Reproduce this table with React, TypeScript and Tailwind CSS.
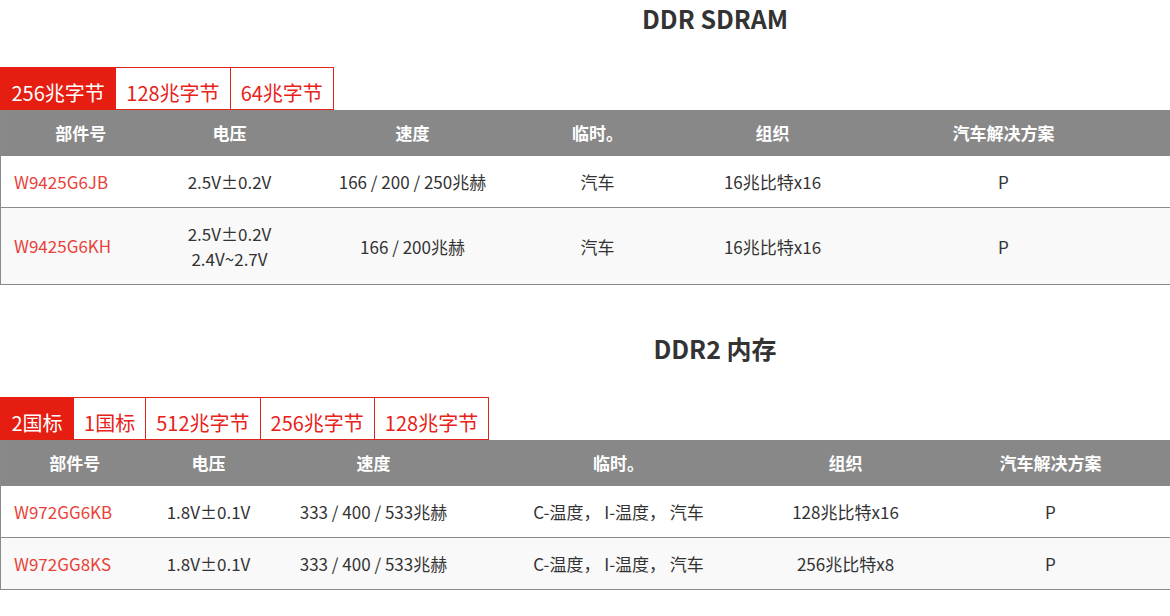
import React from 'react';

type Row = { part: string; cells: React.ReactNode[] };

interface SpecTableProps {
  title: string;
  tabs: string[];
  widths: number[];
  headers: string[];
  rows: Row[];
  topGap: string;
}

function SpecTable({ title, tabs, widths, headers, rows, topGap }: SpecTableProps) {
  return (
    <section className={topGap}>
      <h2 className="h-[38px] text-center text-[25px] font-bold leading-[37px] text-[#333333]">{title}</h2>

      <div className="mt-[29px] flex">
        {tabs.map((t, i) => (
          <div
            key={t}
            className={
              i === 0
                ? 'h-[43px] border border-[#e61e12] bg-[#e61e12] px-[10.5px] pt-[10px] text-[20px] leading-[30px] text-white'
                : 'h-[43px] border border-l-0 border-[#e0261c] bg-white px-[10px] pt-[10px] text-[20px] leading-[30px] text-[#e8221a]'
            }
          >
            {t}
          </div>
        ))}
      </div>

      <table className="w-[1430px] table-fixed border-collapse border-l border-[#8a8a8a]">
        <colgroup>
          {widths.map((w, i) => (
            <col key={i} style={{ width: w }} />
          ))}
          <col />
        </colgroup>
        <thead>
          <tr className="h-[46px] bg-[#888888] text-[17px] font-bold text-white">
            {headers.map((h) => (
              <th key={h} className="text-center font-bold">
                {h}
              </th>
            ))}
            <th />
          </tr>
        </thead>
        <tbody>
          {rows.map((r, i) => (
            <tr
              key={r.part}
              className={
                i % 2 === 0
                  ? 'border-b border-[#8a8a8a] bg-white text-[17px] text-[#333333]'
                  : 'border-b border-[#8a8a8a] bg-[#f9f9f9] text-[17px] text-[#333333]'
              }
            >
              <td className="pl-[13px] text-left text-[#e8423a]">{r.part}</td>
              {r.cells.map((c, j) => (
                <td key={j} className="py-[13px] text-center leading-[25px]">
                  {c}
                </td>
              ))}
              <td />
            </tr>
          ))}
        </tbody>
      </table>
    </section>
  );
}

export default function App() {
  return (
    <div className="w-full overflow-hidden bg-white">
      <div
        className="w-[1430px] pb-[40px]"
        style={{ fontFamily: '"Noto Sans CJK SC", "Noto Sans", sans-serif' }}
      >
        <SpecTable
          title="DDR SDRAM"
          topGap="mt-0"
          tabs={['256兆字节', '128兆字节', '64兆字节']}
          widths={[160, 138, 228, 142, 208, 254]}
          headers={['部件号', '电压', '速度', '临时。', '组织', '汽车解决方案']}
          rows={[
            {
              part: 'W9425G6JB',
              cells: ['2.5V±0.2V', '166 / 200 / 250兆赫', '汽车', '16兆比特x16', 'P'],
            },
            {
              part: 'W9425G6KH',
              cells: [
                <>
                  2.5V±0.2V
                  <br />
                  2.4V~2.7V
                </>,
                '166 / 200兆赫',
                '汽车',
                '16兆比特x16',
                'P',
              ],
            },
          ]}
        />

        <SpecTable
          title="DDR2 内存"
          topGap="mt-[45px]"
          tabs={['2国标', '1国标', '512兆字节', '256兆字节', '128兆字节']}
          widths={[148, 120, 210, 280, 174, 236]}
          headers={['部件号', '电压', '速度', '临时。', '组织', '汽车解决方案']}
          rows={[
            {
              part: 'W972GG6KB',
              cells: ['1.8V±0.1V', '333 / 400 / 533兆赫', 'C-温度， I-温度， 汽车', '128兆比特x16', 'P'],
            },
            {
              part: 'W972GG8KS',
              cells: ['1.8V±0.1V', '333 / 400 / 533兆赫', 'C-温度， I-温度， 汽车', '256兆比特x8', 'P'],
            },
          ]}
        />
      </div>
    </div>
  );
}
